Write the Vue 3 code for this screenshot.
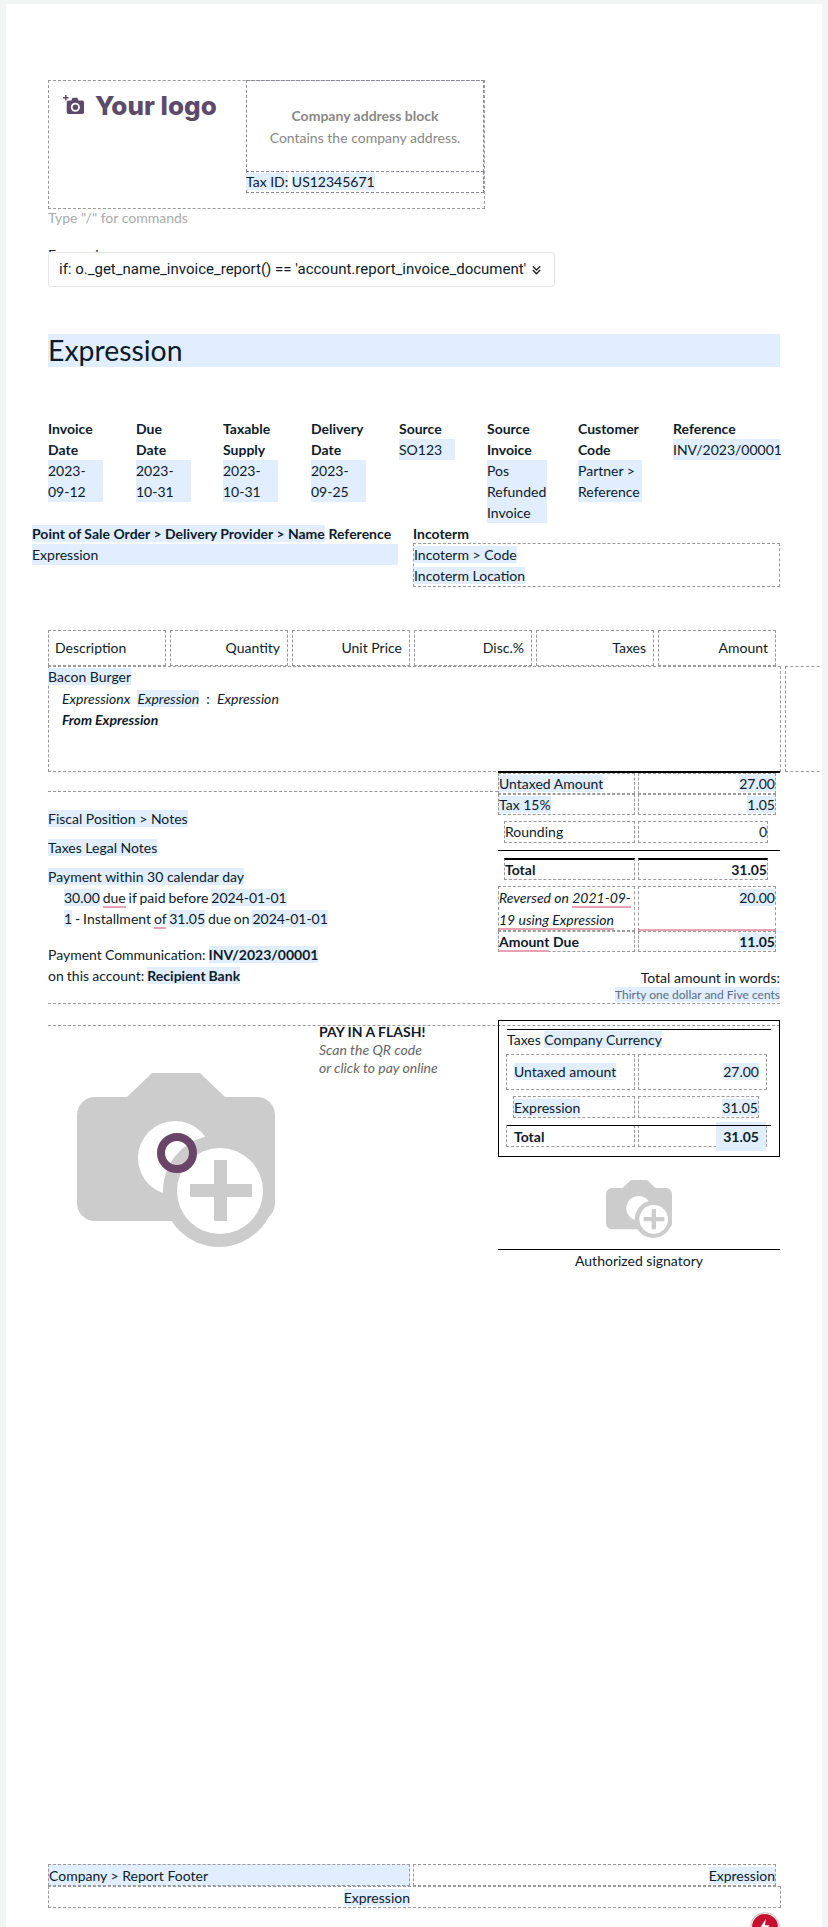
<template>
  <div class="page">
    <!-- 公司資料 -->
    <div class="address_box">
      <div class="logo_box">
        <svg class="logo_icon" viewBox="0 0 24 22">
          <path fill="#5c4a6b" d="M6 6h3l1.5-3h5L17 6h4a2 2 0 0 1 2 2v11a2 2 0 0 1-2 2H6a2 2 0 0 1-2-2V8a2 2 0 0 1 2-2z" />
          <circle cx="13.5" cy="13.5" r="5" fill="#fff" />
          <circle cx="13.5" cy="13.5" r="3" fill="#5c4a6b" />
          <path stroke="#5c4a6b" stroke-width="1.6" d="M3 0v6M0 3h6" />
        </svg>
        <span>Your logo</span>
      </div>
      <div class="company_col">
        <div class="company_block">
          <b>Company address block</b>
          <span>Contains the company address.</span>
        </div>
        <div class="tax_row"><span class="hl">Tax ID:</span> <span class="hl">US12345671</span></div>
      </div>
    </div>
    <div class="placeholder">Type "/" for commands</div>

    <!-- 條件 -->
    <div class="cond_label">Expression</div>
    <div class="cond_box">
      <span>if: o._get_name_invoice_report() == 'account.report_invoice_document'</span>
      <svg viewBox="0 0 12 12" class="chev">
        <path d="M2 2l4 4 4-4M2 6l4 4 4-4" fill="none" stroke="#222" stroke-width="1.5" />
      </svg>
    </div>

    <h1 class="doc_title">Expression</h1>

    <!-- 發票資訊 -->
    <div class="info_row">
      <div v-for="col in infoCols" :key="col.label" class="info_col" :style="{ width: col.width + 'px' }">
        <div :style="{ width: col.box + 'px' }">
          <b>{{ col.label }}</b>
          <div class="hl_block">{{ col.value }}</div>
        </div>
      </div>
    </div>

    <div class="delivery_row">
      <div class="delivery_left">
        <div><b class="hl">Point of Sale Order &gt; Delivery Provider &gt; Name</b> <b>Reference</b></div>
        <div class="hl_line">Expression</div>
      </div>
      <div class="delivery_right">
        <b>Incoterm</b>
        <div class="dash incoterm">
          <div><span class="hl">Incoterm &gt; Code</span></div>
          <div><span class="hl">Incoterm Location</span></div>
        </div>
      </div>
    </div>

    <!-- 明細 -->
    <div class="line_head">
      <div v-for="(h, i) in heads" :key="h" class="dash head_cell" :class="{ left: i == 0 }">{{ h }}</div>
    </div>
    <div class="line_row">
      <div class="dash line_main">
        <div class="line_name"><span class="hl">Bacon Burger</span></div>
        <div class="line_sub">
          <i>Expressionx</i>&nbsp; <i class="hl">Expression</i>&nbsp; : &nbsp;<i>Expression</i>
        </div>
        <div class="line_sub"><b><i>From Expression</i></b></div>
      </div>
      <div class="dash line_extra"></div>
    </div>

    <!-- 合計 -->
    <div class="summary">
      <div class="notes">
        <div class="rule rule_top"></div>
        <div class="note note_first"><span class="hl">Fiscal Position &gt; Notes</span></div>
        <div class="note"><span class="hl">Taxes Legal Notes</span></div>
        <div class="note"><span class="hl">Payment within 30 calendar day</span></div>
        <div class="indent">
          <span class="hl">30.00</span> <span class="wavy">due</span> if paid before <span class="hl">2024-01-01</span>
        </div>
        <div class="indent">
          <span class="hl">1</span> - Installment <span class="wavy">of</span> <span class="hl">31.05</span> due on <span class="hl">2024-01-01</span>
        </div>
        <div class="pay_com">Payment Communication: <b class="hl">INV/2023/00001</b></div>
        <div class="pay_acc">on this account: <b class="hl">Recipient Bank</b></div>
      </div>
      <div class="totals">
        <div class="t_row"><div class="dash t_l"><span class="hl">Untaxed Amount</span></div><div class="dash t_r"><span class="hl">27.00</span></div></div>
        <div class="t_row"><div class="dash t_l"><span class="hl">Tax 15%</span></div><div class="dash t_r"><span class="hl">1.05</span></div></div>
        <div class="t_row inner round"><div class="dash t_l">Rounding</div><div class="dash t_r">0</div></div>
        <div class="t_rule"></div>
        <div class="t_row inner total"><div class="dash t_l"><b>Total</b></div><div class="dash t_r"><b>31.05</b></div></div>
        <div class="t_row reversed">
          <div class="dash t_l"><i>Reversed on <span class="wavy">2021-09-</span><br /><span class="wavy">19 using Expression</span></i></div>
          <div class="dash t_r pink"><span class="hl">20.00</span></div>
        </div>
        <div class="t_row"><div class="dash t_l"><b class="wavy">Amount</b> <b>Due</b></div><div class="dash t_r"><b class="hl">11.05</b></div></div>
        <div class="words">Total amount in words:</div>
        <div class="words small"><span class="hl">Thirty one dollar and Five cents</span></div>
      </div>
    </div>

    <!-- 付款 -->
    <div class="pay_area">
      <div class="rule pay_rule"></div>
      <div class="pay_left">
        <svg class="camera" viewBox="0 0 198 174">
          <path fill="#ccc" d="M50 24L75 0h48l25 24h32a18 18 0 0 1 18 18v88a18 18 0 0 1-18 18H18a18 18 0 0 1-18-18V42a18 18 0 0 1 18-18z" />
          <circle cx="98" cy="85" r="37" fill="#fff" />
          <circle cx="142" cy="118" r="56" fill="#ccc" />
          <circle cx="143" cy="118" r="43" fill="#fff" />
          <path fill="#ccc" d="M137 87h13v24h25v13h-25v24h-13v-24h-24v-13h24z" />
          <circle cx="100" cy="80" r="16" fill="none" stroke="#6b4567" stroke-width="8" />
        </svg>
        <div class="qr_text">
          <b>PAY IN A FLASH!</b>
          <i>Scan the QR code</i>
          <i>or click to pay online</i>
        </div>
      </div>
      <div class="pay_right">
        <div class="tax_box">
          <div class="tax_box_title">Taxes <span class="hl">Company Currency</span></div>
          <div class="tb_row tb_first">
            <div class="dash tb_l"><span class="hl">Untaxed amount</span></div>
            <div class="dash tb_r"><span class="hl">27.00</span></div>
          </div>
          <div class="tb_row tb_second">
            <div class="dash tb_l"><span class="hl">Expression</span></div>
            <div class="dash tb_r"><span class="hl">31.05</span></div>
          </div>
          <div class="tb_row tb_third">
            <div class="dash tb_l"><b>Total</b></div>
            <div class="dash tb_r"><b class="hl tb_total">31.05</b></div>
          </div>
        </div>
        <svg class="camera small_cam" viewBox="0 0 198 174">
          <path fill="#ccc" d="M50 24L75 0h48l25 24h32a18 18 0 0 1 18 18v88a18 18 0 0 1-18 18H18a18 18 0 0 1-18-18V42a18 18 0 0 1 18-18z" />
          <circle cx="98" cy="85" r="37" fill="#fff" />
          <circle cx="142" cy="118" r="56" fill="#ccc" />
          <circle cx="143" cy="118" r="43" fill="#fff" />
          <path fill="#ccc" d="M137 87h13v24h25v13h-25v24h-13v-24h-24v-13h24z" />
        </svg>
        <div class="sign">Authorized signatory</div>
      </div>
    </div>

    <!-- 頁尾 -->
    <div class="footer">
      <div class="foot_top">
        <div class="dash foot_l">Company &gt; Report Footer</div>
        <div class="dash foot_r"><span class="hl">Expression</span></div>
      </div>
      <div class="dash foot_bottom"><div class="foot_half"><span class="hl">Expression</span></div></div>
    </div>
    <div class="fab">
      <svg viewBox="0 0 24 24"><path fill="#fff" d="M13 3L6 14h5l-1 7 7-11h-5z" /></svg>
    </div>
  </div>
</template>

<script setup>
// 發票資訊欄位
const infoCols = [
  { label: 'Invoice Date', value: '2023-09-12', width: 88, box: 55 },
  { label: 'Due Date', value: '2023-10-31', width: 87, box: 55 },
  { label: 'Taxable Supply', value: '2023-10-31', width: 88, box: 55 },
  { label: 'Delivery Date', value: '2023-09-25', width: 88, box: 55 },
  { label: 'Source', value: 'SO123', width: 88, box: 56 },
  { label: 'Source Invoice', value: 'Pos Refunded Invoice', width: 91, box: 60 },
  { label: 'Customer Code', value: 'Partner > Reference', width: 95, box: 64 },
  { label: 'Reference', value: 'INV/2023/00001', width: 107, box: 107 },
]
const heads = ['Description', 'Quantity', 'Unit Price', 'Disc.%', 'Taxes', 'Amount']
</script>

<style>
html,
body {
  margin: 0;
  background: #f3f5f5;
}
</style>

<style scoped>
.page {
  position: relative;
  box-sizing: border-box;
  margin: 4px 6px 0;
  height: 1923px;
  padding: 76px 42px 0;
  background: #fff;
  overflow: hidden;
  font-family: Lato, "Liberation Sans", sans-serif;
  font-size: 14px;
  line-height: 21px;
  color: #0d1b2a;
}
b {
  font-weight: 700;
}
.hl {
  background: #e0eeff;
}
.dash {
  box-sizing: border-box;
  border: 1px dashed #9a9a9a;
}
.wavy {
  border-bottom: 2px solid #e8a0b4;
}
/* 公司資料 */
.address_box {
  box-sizing: border-box;
  display: flex;
  width: 437px;
  height: 129px;
  border: 1px dashed #9a9a9a;
}
.logo_box {
  width: 197px;
  padding: 10px 0 0 14px;
  box-sizing: border-box;
  display: flex;
  align-items: flex-start;
  gap: 10px;
  color: #5c4a6b;
  font-family: Inter, Lato, sans-serif;
  font-size: 26px;
  font-weight: 800;
  line-height: 30px;
}
.logo_icon {
  width: 22px;
  height: 20px;
  margin-top: 4px;
}
.company_col {
  flex: 1;
}
.company_block {
  box-sizing: border-box;
  height: 92px;
  margin-top: -1px;
  border: 1px dashed #8a8a9a;
  display: flex;
  flex-direction: column;
  align-items: center;
  justify-content: center;
  color: #888;
}
.company_block b {
  margin-bottom: 1px;
}
.tax_row {
  box-sizing: border-box;
  height: 21px;
  border: 1px dashed #8a8a9a;
  border-top: 0;
  line-height: 20px;
}
.tax_row span:first-child {
  margin-left: -1px;
}
.placeholder {
  color: #aaa;
  margin-top: -2px;
}
.cond_label {
  height: 8px;
  margin-top: 16px;
  overflow: hidden;
}
.cond_box {
  box-sizing: border-box;
  width: 507px;
  height: 35px;
  padding: 0 12px 0 10px;
  display: flex;
  align-items: center;
  justify-content: space-between;
  border: 1px solid #e4e6e8;
  border-radius: 3px;
  background: #fff;
  font-family: Roboto, sans-serif;
  font-size: 15px;
  white-space: nowrap;
}
.chev {
  width: 11px;
  height: 12px;
}
.doc_title {
  margin: 47px 0 0;
  height: 33px;
  background: #e0eeff;
  font-size: 28.4px;
  font-weight: 400;
  line-height: 33px;
}
/* 發票資訊 */
.info_row {
  display: flex;
  margin-top: 51px;
  width: 732px;
}
.info_col b {
  display: block;
}
.hl_block {
  background: #e0eeff;
}
.delivery_row {
  display: flex;
  margin-left: -16px;
  height: 64px;
}
.delivery_left {
  width: 366px;
}
.hl_line {
  background: #e0eeff;
}
.delivery_right {
  width: 367px;
  margin-left: 15px;
}
.incoterm {
  height: 44px;
  margin-top: -1px;
}
/* 明細 */
.line_head {
  display: flex;
  gap: 4px;
  margin-top: 43px;
}
.head_cell {
  width: 118px;
  height: 36px;
  padding: 0 7px;
  text-align: right;
  line-height: 34px;
}
.head_cell.left {
  text-align: left;
  padding: 0 6px;
}
.line_row {
  display: flex;
  gap: 4px;
  width: 780px;
}
.line_main {
  flex: none;
  width: 733px;
  height: 106px;
}
.line_extra {
  flex: none;
  width: 40px;
  height: 106px;
}
.line_name {
  margin: -1px 0 1px -1px;
}
.line_sub {
  padding-left: 13px;
}
/* 合計 */
.summary {
  display: flex;
  justify-content: space-between;
  width: 732px;
  margin-top: -1px;
  border-bottom: 1px dashed #9a9a9a;
}
.notes {
  width: 450px;
}
.rule {
  border-top: 1px dashed #9a9a9a;
}
.rule_top {
  margin-top: 20px;
}
.note {
  margin-top: 8px;
}
.note_first {
  margin-top: 16px;
}
.indent {
  padding-left: 16px;
  word-spacing: -0.7px;
}
.pay_com {
  margin-top: 15px;
  word-spacing: -0.5px;
}
.pay_acc {
  word-spacing: -0.5px;
}
.totals {
  width: 282px;
  border-top: 2px solid #000;
}
.t_row {
  display: flex;
  gap: 3px;
  width: 278px;
}
.t_l {
  width: 137px;
  height: 21px;
  line-height: 20px;
}
.t_r {
  width: 138px;
  height: 21px;
  line-height: 20px;
  text-align: right;
}
.inner {
  padding-left: 6px;
  width: 270px;
  box-sizing: border-box;
}
.inner .t_l {
  width: 131px;
  height: 22px;
}
.inner .t_r {
  width: 130px;
  height: 22px;
}
.round {
  margin-top: 6px;
}
.t_rule {
  margin-top: 7px;
  border-top: 1px solid #000;
}
.total {
  margin-top: 7px;
}
.total .t_l,
.total .t_r {
  border-top: 2px solid #000;
}
.reversed {
  margin-top: 6px;
}
.reversed .t_l,
.reversed .t_r {
  height: 45px;
  line-height: 22px;
}
.pink {
  border-bottom: 2px solid #e8a0b4;
}
.words {
  text-align: right;
  margin-top: 15px;
}
.small {
  margin-top: -1px;
  font-size: 12px;
  line-height: 16px;
  color: #5c6b85;
}
/* 付款 */
.pay_area {
  position: relative;
  display: flex;
  justify-content: space-between;
  width: 732px;
}
.pay_rule {
  position: absolute;
  left: 0;
  right: 0;
  top: 21px;
}
.pay_left {
  display: flex;
  width: 450px;
  padding-top: 19px;
}
.camera {
  display: block;
  flex: none;
  width: 198px;
  height: 174px;
  margin: 50px 44px 0 29px;
}
.qr_text {
  display: flex;
  flex-direction: column;
  line-height: 18px;
}
.qr_text i {
  color: #666;
}
.pay_right {
  position: relative;
  width: 282px;
  padding-top: 16px;
}
.tax_box {
  box-sizing: border-box;
  height: 137px;
  border: 1px solid #000;
  padding: 8px 8px 0;
}
.tax_box_title {
  border-top: 1px solid #000;
  line-height: 20px;
}
.tb_row {
  display: flex;
  gap: 3px;
  margin-left: -1px;
}
.tb_l,
.tb_r {
  width: 129px;
}
.tb_r {
  text-align: right;
}
.tb_first {
  margin-top: 4px;
}
.tb_first .tb_l,
.tb_first .tb_r {
  height: 36px;
  padding: 6px 7px;
}
.tb_second {
  margin-top: 6px;
  padding-left: 7px;
}
.tb_second .tb_l {
  width: 122px;
  height: 22px;
}
.tb_second .tb_r {
  width: 121px;
  height: 22px;
}
.tb_third {
  margin-top: 7px;
  position: relative;
}
.tb_third::before {
  content: "";
  position: absolute;
  top: 0;
  left: 1px;
  width: 264px;
  border-top: 1px solid #000;
}
.tb_third .tb_l,
.tb_third .tb_r {
  height: 22px;
  padding: 0 7px;
}
.tb_total {
  display: inline-block;
  height: 29px;
  margin: -4px -7px 0 0;
  padding: 0 7px;
  line-height: 29px;
}
.small_cam {
  width: 66px;
  height: 58px;
  margin: 23px auto 0;
}
.sign {
  margin-top: 11px;
  border-top: 1px solid #000;
  text-align: center;
}
/* 頁尾 */
.footer {
  position: absolute;
  left: 42px;
  top: 1860px;
  width: 733px;
}
.foot_top {
  display: flex;
  gap: 3px;
}
.foot_l {
  width: 362px;
  height: 22px;
  background: #e0eeff;
}
.foot_r {
  width: 363px;
  height: 22px;
  text-align: right;
}
.foot_bottom {
  height: 22px;
}
.foot_half {
  width: 361px;
  text-align: right;
}
.fab {
  position: absolute;
  left: 744px;
  top: 1908px;
  box-sizing: border-box;
  width: 30px;
  height: 30px;
  border-radius: 50%;
  background: #c8102e;
  border: 1px solid #ddd;
  box-shadow: 0 0 0 1px #fff inset;
}
.fab svg {
  display: block;
  width: 22px;
  height: 22px;
  margin: 3px;
}
</style>
